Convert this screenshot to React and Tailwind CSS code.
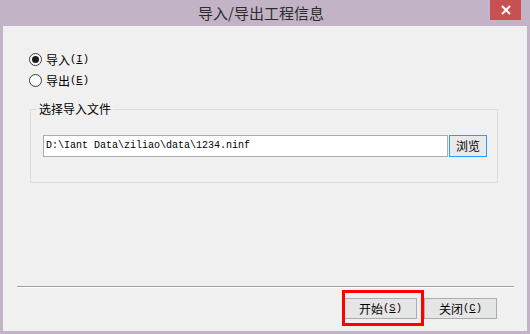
import React from "react";

const cjk = { fontFamily: '"Noto Sans CJK SC", "Noto Sans", sans-serif' };
const mono = { fontFamily: '"Liberation Mono", "DejaVu Sans Mono", monospace' };

function Mn({ k }) {
  return (
    <span className="text-[10.5px]" style={mono}>
      (<span className="underline">{k}</span>)
    </span>
  );
}

function Radio({ checked, label, mnemonic }) {
  return (
    <div className="flex items-center h-[21px]">
      <div className="w-[13px] h-[13px] rounded-full border border-[#3c3c3c] bg-white flex items-center justify-center">
        {checked && <div className="w-[7px] h-[7px] rounded-full bg-[#1c1c1c]" />}
      </div>
      <span className="ml-[4px] text-[12px] leading-none text-black flex items-center" style={cjk}>
        {label}
        <Mn k={mnemonic} />
      </span>
    </div>
  );
}

export default function App() {
  return (
    <div className="w-[530px] h-[334px] bg-[#c3b3c6] flex flex-col overflow-hidden" style={cjk}>
      <div className="relative h-[26px] flex items-center justify-center pr-[8px] pb-[1px]">
        <span className="text-[15px] leading-none text-[#2c2c2c]">导入/导出工程信息</span>
        <div className="absolute right-[9px] top-0 w-[31px] h-[20px] bg-[#c75050] flex items-center justify-center">
          <svg width="10" height="10" viewBox="0 0 10 10">
            <path d="M1 1 L9 9 M9 1 L1 9" stroke="white" strokeWidth="2" />
          </svg>
        </div>
      </div>
      <div className="mx-[3px] h-[305px] bg-[#f0f0f0] flex flex-col relative">
        <div className="mt-[23px] ml-[26px] flex flex-col">
          <Radio checked label="导入" mnemonic="I" />
          <Radio label="导出" mnemonic="E" />
        </div>
        <div className="relative mt-[18px] ml-[27px] w-[468px] h-[74px] border border-[#dcdcdc] pl-[12px] pt-[25px] flex">
          <span className="absolute -top-[9px] left-[6px] bg-[#f0f0f0] px-[2px] text-[12px] leading-[16px] text-black">
            选择导入文件
          </span>
          <div className="w-[405px] h-[22px] bg-white border border-[#acacac] flex items-center pl-[2px]">
            <span className="text-[10px] leading-none text-black" style={mono}>
              D:\Iant Data\ziliao\data\1234.ninf
            </span>
          </div>
          <div className="ml-[1px] w-[38px] h-[22px] border border-[#3399ff] bg-[#e9e9e9] flex items-center justify-center text-[12px] leading-none text-black">
            浏览
          </div>
        </div>
        <div className="mt-[103px] ml-[14px] w-[497px] border-t border-[#a0a0a0] border-b border-b-white" />
        <div className="mt-[10px] flex justify-end pr-[30px] gap-[7px]">
          <div className="w-[73px] h-[21px] border border-[#acacac] bg-[#e5e5e5] flex items-center justify-center text-[12px] leading-none text-black">
            开始
            <Mn k="S" />
          </div>
          <div className="w-[73px] h-[21px] border border-[#acacac] bg-[#e5e5e5] flex items-center justify-center text-[12px] leading-none text-black">
            关闭
            <Mn k="C" />
          </div>
        </div>
        <div className="absolute left-[339px] top-[264px] w-[82px] h-[36px] border-[3px] border-[#ff0000]" />
      </div>
    </div>
  );
}
